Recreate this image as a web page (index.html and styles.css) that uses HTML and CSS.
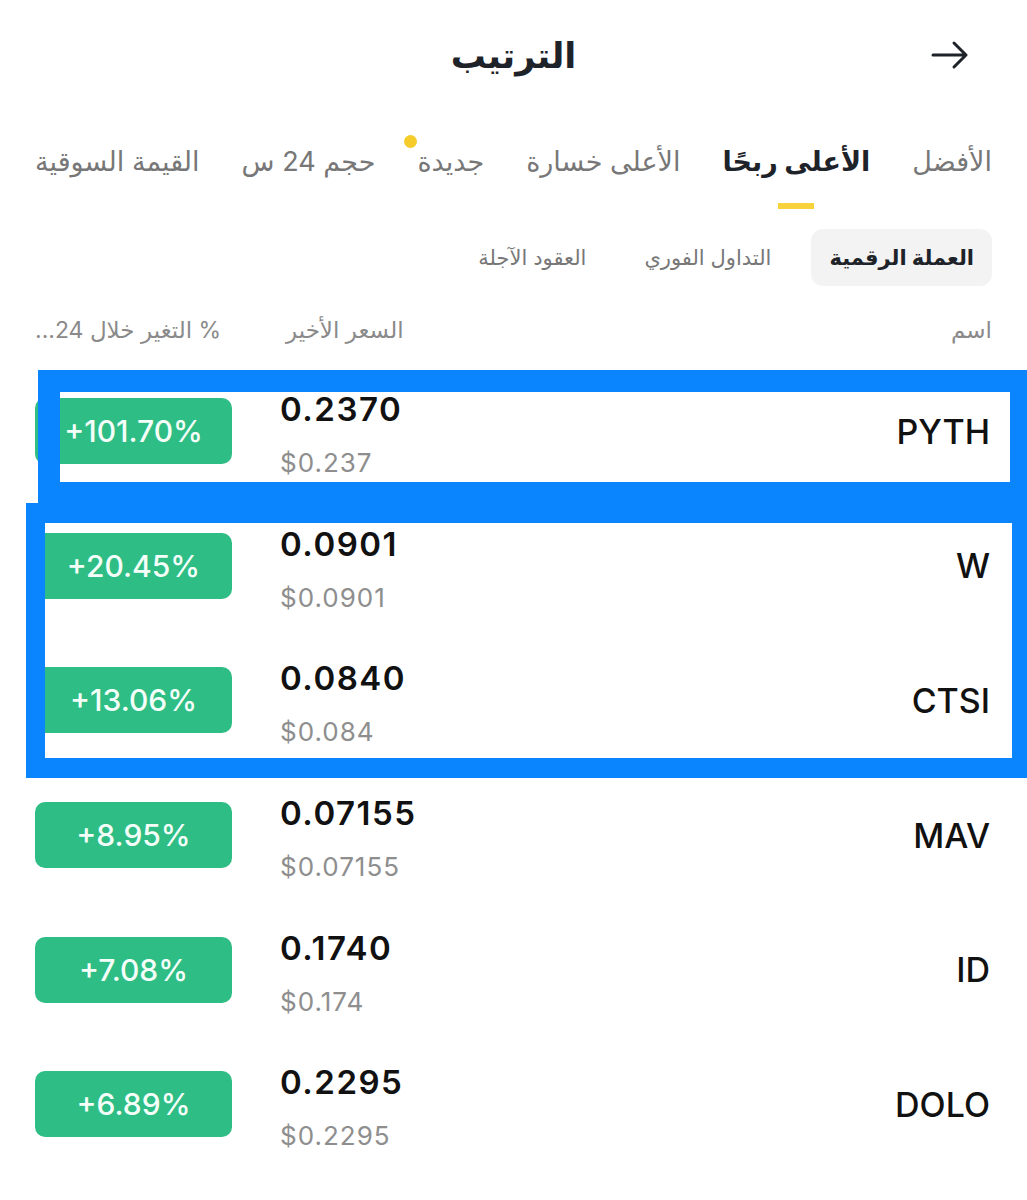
FILE: index.html
```html
<!DOCTYPE html>
<html lang="ar" dir="rtl">
<head>
    <meta charset="UTF-8">
    <meta name="viewport" content="width=device-width, initial-scale=1.0">
    <title>الترتيب</title>
    <link rel="stylesheet" href="styles.css">
</head>
<body>
    <header class="top-bar">
        <span class="back">
            <svg width="40" height="30" viewBox="0 0 40 30"><path d="M3 15 H36 M24 3 L36 15 L24 27" fill="none" stroke="#1e2329" stroke-width="3" stroke-linecap="round" stroke-linejoin="round"/></svg>
        </span>
        <h1>الترتيب</h1>
        <span></span>
    </header>

    <nav class="tabs">
        <span class="tab">الأفضل</span>
        <span class="tab active">الأعلى ربحًا</span>
        <span class="tab">الأعلى خسارة</span>
        <span class="tab has-dot">جديدة</span>
        <span class="tab">حجم 24 س</span>
        <span class="tab">القيمة السوقية</span>
    </nav>

    <div class="sub-tabs">
        <span class="sub-tab active">العملة الرقمية</span>
        <span class="sub-tab">التداول الفوري</span>
        <span class="sub-tab">العقود الآجلة</span>
    </div>

    <div class="col-head">
        <span>اسم</span>
        <span class="price-head">السعر الأخير</span>
        <span class="change-head">% التغير خلال 24...</span>
    </div>

    <div class="list">
        <div class="row">
            <span class="symbol">PYTH</span>
            <div class="price"><div class="last">0.2370</div><div class="usd">$0.237</div></div>
            <span class="change">+101.70%</span>
        </div>
        <div class="row">
            <span class="symbol">W</span>
            <div class="price"><div class="last">0.0901</div><div class="usd">$0.0901</div></div>
            <span class="change">+20.45%</span>
        </div>
        <div class="row">
            <span class="symbol">CTSI</span>
            <div class="price"><div class="last">0.0840</div><div class="usd">$0.084</div></div>
            <span class="change">+13.06%</span>
        </div>
        <div class="row">
            <span class="symbol">MAV</span>
            <div class="price"><div class="last">0.07155</div><div class="usd">$0.07155</div></div>
            <span class="change">+8.95%</span>
        </div>
        <div class="row">
            <span class="symbol">ID</span>
            <div class="price"><div class="last">0.1740</div><div class="usd">$0.174</div></div>
            <span class="change">+7.08%</span>
        </div>
        <div class="row">
            <span class="symbol">DOLO</span>
            <div class="price"><div class="last">0.2295</div><div class="usd">$0.2295</div></div>
            <span class="change">+6.89%</span>
        </div>

        <!-- annotation frames drawn over the list -->
        <div class="mark mark-one"></div>
        <div class="mark mark-two"></div>
    </div>
</body>
</html>
```

FILE: styles.css
```css
html, body {
    overflow-x: hidden;
}
body {
    margin: 0;
    padding: 0 35px;
    background-color: white;
    color: #1e2329;
    font-family: Inter, "DejaVu Sans", sans-serif;
}
.top-bar {
    height: 110px;
    display: grid;
    grid-template-columns: 1fr auto 1fr;
    align-items: center;
}
.back {
    display: flex;
    padding-right: 22px;
}
h1 {
    margin: 0;
    font-size: 35px;
    font-weight: bold;
    color: #1e2329;
}
.tabs {
    margin-top: 32px;
    display: flex;
    justify-content: space-between;
}
.tab {
    position: relative;
    display: flex;
    flex-direction: column;
    align-items: center;
    font-size: 27px;
    line-height: 40px;
    color: #777;
}
.tab.active {
    color: #1e2329;
    font-weight: bold;
}
.tab::after {
    content: "";
    display: block;
    width: 36px;
    height: 6px;
    margin-top: 21px;
}
.tab.active::after {
    background-color: #f7d23a;
}
.has-dot::before {
    content: "";
    position: absolute;
    top: -7px;
    left: -13px;
    width: 13px;
    height: 13px;
    border-radius: 50%;
    background-color: #f5cc2a;
}
.sub-tabs {
    margin-top: 20px;
    display: flex;
    gap: 22px;
}
.sub-tab {
    height: 57px;
    padding: 0 18px;
    display: flex;
    align-items: center;
    border-radius: 12px;
    font-size: 21px;
    color: #777;
}
.sub-tab.active {
    background-color: #f3f3f3;
    color: #1e2329;
    font-weight: bold;
}
.col-head,
.row {
    display: grid;
    grid-template-columns: 1fr 150px 245px;
    align-items: center;
}
.col-head {
    margin-top: 30px;
    line-height: 28px;
    font-size: 23px;
    color: #8a8a8a;
}
.price-head {
    text-align: left;
    padding-left: 6px;
}
.change-head {
    text-align: left;
}
.list {
    position: relative;
    margin-top: 20px;
}
.row {
    height: 134.6px;
}
.symbol {
    font-size: 34px;
    font-weight: 500;
    color: #111;
    padding-right: 2px;
}
.price {
    direction: ltr;
    text-align: left;
    padding-top: 10px;
}
.last {
    font-size: 33px;
    font-weight: 600;
    line-height: 53px;
    letter-spacing: 1.5px;
    color: #111;
}
.usd {
    font-size: 26px;
    line-height: 53px;
    letter-spacing: 1px;
    color: #8e8e8e;
}
.change {
    justify-self: end;
    width: 197px;
    height: 66px;
    display: flex;
    align-items: center;
    justify-content: center;
    border-radius: 10px;
    background-color: #2ebd85;
    color: #f4fff9;
    font-size: 30px;
    font-weight: 500;
    direction: ltr;
}
.mark {
    position: absolute;
    box-sizing: border-box;
    border: 0 solid #0b85fd;
}
.mark-one {
    top: 6px;
    left: 3px;
    right: -35px;
    height: 133px;
    border-width: 22px 17px 21px 22px;
}
.mark-two {
    top: 139px;
    left: -9px;
    right: -35px;
    height: 275px;
    border-width: 20px 15px 20px 19px;
}
```
